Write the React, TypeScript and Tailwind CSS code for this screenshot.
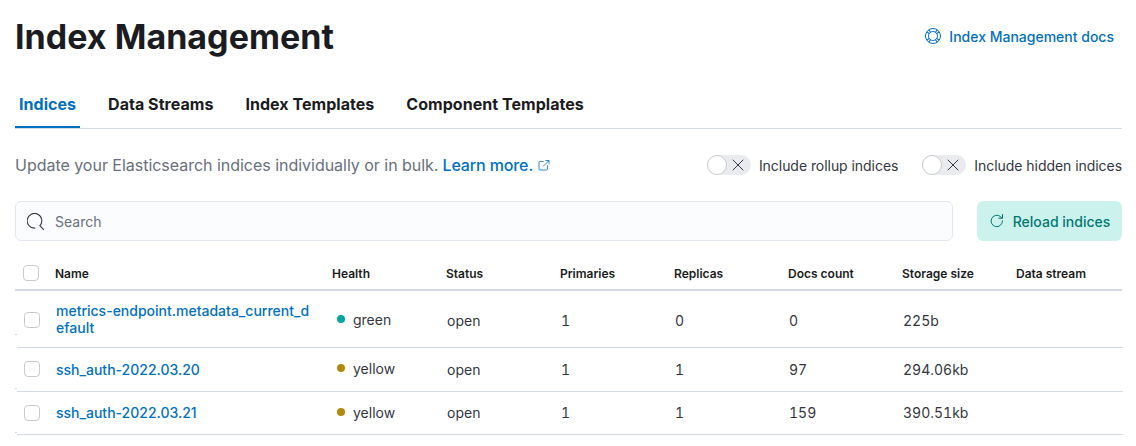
import React from "react";

const tabs = ["Indices", "Data Streams", "Index Templates", "Component Templates"];

const headers = ["Name", "Health", "Status", "Primaries", "Replicas", "Docs count", "Storage size", "Data stream"];

type Row = {
  name: string;
  health: "green" | "yellow";
  cells: string[];
  height: string;
  marker: string;
  checkPad: string;
  namePad: string;
  cellPad: string;
};

const rows: Row[] = [
  {
    name: "metrics-endpoint.metadata_current_default",
    health: "green",
    cells: ["open", "1", "0", "0", "225b"],
    height: "h-[57px]",
    marker: "mb-[13px]",
    checkPad: "pt-0.5",
    namePad: "",
    cellPad: "pt-1",
  },
  {
    name: "ssh_auth-2022.03.20",
    health: "yellow",
    cells: ["open", "1", "1", "97", "294.06kb"],
    height: "h-11",
    marker: "mb-[3px]",
    checkPad: "pb-0.5",
    namePad: "",
    cellPad: "",
  },
  {
    name: "ssh_auth-2022.03.21",
    health: "yellow",
    cells: ["open", "1", "1", "159", "390.51kb"],
    height: "h-[43px]",
    marker: "mb-0.5",
    checkPad: "",
    namePad: "pb-0.5",
    cellPad: "",
  },
];

function HelpIcon() {
  return (
    <svg width="16" height="16" viewBox="0 0 16 16" fill="none" stroke="currentColor">
      <circle cx="8" cy="8" r="7.5" />
      <circle cx="8" cy="8" r="4.5" />
      <path strokeWidth="1.1" d="M2 3.900l2.200 1.600M3.900 2l1.600 2.200M12.100 2l-1.600 2.200M14 3.900l-2.200 1.600M2 12.100l2.200-1.600M3.900 14l1.600-2.200M12.100 14l-1.600-2.200M14 12.100l-2.200-1.600" />
    </svg>
  );
}

function PopoutIcon() {
  return (
    <svg width="12" height="12" viewBox="0 0 12 12" fill="none" stroke="currentColor" strokeWidth="0.8" strokeLinecap="round">
      <path d="M5.200 2.500H2a1 1 0 00-1 1V10a1 1 0 001 1h6.500a1 1 0 001-1V6.800M7.800 1.500H11v3.200M10.800 1.700L5.300 7.200" />
    </svg>
  );
}

function SearchIcon() {
  return (
    <svg width="17" height="17" viewBox="0 0 16 16" fill="none" stroke="currentColor" strokeLinecap="round">
      <path d="M7.500 14.200A6.900 6.900 0 1 1 12.100 12L15.500 15.400" />
    </svg>
  );
}

function RefreshIcon() {
  return (
    <svg width="16" height="16" viewBox="0 0 16 16" fill="none" stroke="currentColor" strokeLinecap="round">
      <path d="M13.500 8A5.700 5.700 0 1 1 11.200 3.400L13 5M13.500 1.500v3.700h-3.700" />
    </svg>
  );
}

function Switch({ label }: { label: string }) {
  return (
    <div className="flex items-center gap-2">
      <span className="flex h-5 w-11 items-center rounded-full bg-[#e9ebef]">
        <span className="size-5 rounded-full border border-[#c9cbcd] bg-white" />
        <svg width="12" height="12" viewBox="0 0 12 12" fill="none" stroke="#343741" strokeLinecap="round" className="ml-[5px]">
          <path d="M1 1l10 10M11 1l-10 10" />
        </svg>
      </span>
      <span className="whitespace-nowrap pt-0.5 text-sm tracking-[-0.05px] text-[#343741]">{label}</span>
    </div>
  );
}

function Checkbox() {
  return <span className="block size-4 rounded border border-[#c9cbcd] bg-white" />;
}

export default function App() {
  return (
    <main className="h-[446px] w-[1136px] overflow-hidden bg-white pl-[15px] pr-[13px] font-['Inter',sans-serif] text-[#343741]">
      <header className="flex h-[74px] items-center justify-between pr-[9px]">
        <h1 className="text-[34px] font-bold leading-10 tracking-[0.03px] text-[#1a1c21]">Index Management</h1>
        <a className="flex items-center gap-2 text-sm font-medium text-[#0071c2]">
          <span className="pb-0.5"><HelpIcon /></span>
          Index Management docs
        </a>
      </header>

      <nav className="mr-px mt-[7px] flex h-12 gap-6 border-b border-[#d3dae6] tracking-[0.04px]">
        {tabs.map((tab, i) => (
          <a
            key={tab}
            className={
              i === 0
                ? "flex h-[47px] items-center border-b-2 border-[#0071c2] px-1 font-bold text-[#0071c2]"
                : "flex h-[47px] items-center border-b-2 border-transparent px-1 font-bold text-[#1a1c21]"
            }
          >
            {tab}
          </a>
        ))}
      </nav>

      <section className="mr-px flex h-[72px] items-center justify-between">
        <p className="flex items-center text-base tracking-[-0.025px] text-[#69707d]">
          Update your Elasticsearch indices individually or in bulk.
          <a className="ml-1 flex items-center gap-[5px] font-medium tracking-[-0.12px] text-[#0071c2]">
            Learn more.
            <PopoutIcon />
          </a>
        </p>
        <div className="flex gap-6">
          <Switch label="Include rollup indices" />
          <Switch label="Include hidden indices" />
        </div>
      </section>

      <section className="mr-px flex h-10 gap-6">
        <div className="flex flex-1 items-center gap-[11px] rounded-md border border-[#e1e6f0] bg-[#fbfcfd] px-[11px]">
          <SearchIcon />
          <span className="pt-0.5 text-sm text-[#69707d]">Search</span>
        </div>
        <button className="flex w-[145px] items-center justify-center gap-2 rounded-md bg-[#ccf2ee] text-sm font-medium text-[#007871]">
          <RefreshIcon />
          <span className="pt-0.5">Reload indices</span>
        </button>
      </section>

      <div className="mr-px mt-[15px] grid h-[35px] grid-cols-[40px_277px_repeat(6,114px)_1fr] items-center border-b-2 border-[#d3dae6] text-xs font-semibold text-[#1a1c21]">
        <div className="pl-2"><Checkbox /></div>
        {headers.map((h) => <div key={h} className="pt-0.5">{h}</div>)}
      </div>

      {rows.map((row) => (
        <div key={row.name} className={`flex ${row.height}`}>
          <span className={`w-0.5 border-b border-[#d3dae6] ${row.marker}`} />
          <div className="grid flex-1 grid-cols-[39px_277px_repeat(6,114px)_1fr] items-center border-b border-[#d3dae6] text-sm">
            <div className={`pl-[7px] ${row.checkPad}`}><Checkbox /></div>
            <a className={`w-[256px] break-all font-medium leading-[17px] text-[#0071c2] ${row.namePad}`}>{row.name}</a>
            <div className={`flex items-center gap-2 pl-1 ${row.checkPad}`}>
              <span className={row.health === "green" ? "mb-0.5 size-2 rounded-full bg-[#00a69b]" : "mb-0.5 size-2 rounded-full bg-[#b0890f]"} />
              <span>{row.health}</span>
            </div>
            {row.cells.map((c, i) => <div key={i} className={`tabular-nums ${row.cellPad}`}>{c}</div>)}
          </div>
        </div>
      ))}
    </main>
  );
}
